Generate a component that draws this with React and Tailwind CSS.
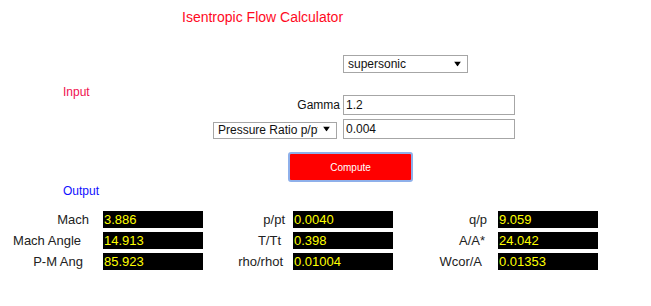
import React, { useState } from "react";

const rows = [
  [
    { label: "Mach", value: "3.886", pad: "pr-[14px]" },
    { label: "p/pt", value: "0.0040", pad: "pr-[8px]" },
    { label: "q/p", value: "9.059", pad: "pr-[11px]" },
  ],
  [
    { label: "Mach Angle", value: "14.913", pad: "pr-[22px]" },
    { label: "T/Tt", value: "0.398", pad: "pr-[12px]" },
    { label: "A/A*", value: "24.042", pad: "pr-[13px]" },
  ],
  [
    { label: "P-M Ang", value: "85.923", pad: "pr-[20px]" },
    { label: "rho/rhot", value: "0.01004", pad: "pr-[10px]" },
    { label: "Wcor/A", value: "0.01353", pad: "pr-[16px]" },
  ],
];

// label cell widths for the three output columns
const labelWidths = ["w-[103px]", "w-[90px]", "w-[105px]"];

const Arrow = () => (
  <svg
    width="7"
    height="5"
    viewBox="0 0 7 5"
    className="pointer-events-none absolute right-[7px] top-1/2 -translate-y-1/2"
  >
    <path d="M0 0 H7 L3.5 5 Z" fill="#000" />
  </svg>
);

const App = () => {
  const [mode, setMode] = useState("supersonic");
  const [inputType, setInputType] = useState("p");
  const [gamma, setGamma] = useState("1.2");
  const [ratio, setRatio] = useState("0.004");

  return (
    <div
      className="w-[651px] h-[306px] bg-white text-[12px] text-[#111]"
      style={{ fontFamily: '"Liberation Sans", Arial, sans-serif' }}
    >
      <h1 className="pt-[9px] pl-[182px] text-[14px] leading-[16px] text-[#ff0a1e]">
        Isentropic Flow Calculator
      </h1>

      <div className="mt-[30px] pl-[343px]">
        <div className="relative w-[125px] h-[18px]">
          <select
            value={mode}
            onChange={(e) => setMode(e.target.value)}
            className="appearance-none w-full h-full border border-[#a6a6a6] bg-white pl-[4px] text-[12px] leading-[16px] outline-none"
          >
            <option value="supersonic">supersonic</option>
            <option value="subsonic">subsonic</option>
          </select>
          <Arrow />
        </div>
      </div>

      <div className="mt-[12px] pl-[63px] leading-[14px] text-[#f0104e]">Input</div>

      <div className="-mt-[4px] flex items-center">
        <div className="w-[340px] text-right leading-[14px]">Gamma</div>
        <input
          value={gamma}
          onChange={(e) => setGamma(e.target.value)}
          className="ml-[3px] w-[172px] h-[20px] border border-[#a6a6a6] px-[2px] text-[12px] outline-none"
        />
      </div>

      <div className="mt-[4px] flex items-center pl-[213px]">
        <div className="relative w-[124px] h-[17px]">
          <select
            value={inputType}
            onChange={(e) => setInputType(e.target.value)}
            className="appearance-none w-full h-full overflow-hidden border border-[#a6a6a6] bg-white pl-[4px] pr-[18px] text-[12px] leading-[15px] outline-none"
          >
            <option value="p">Pressure Ratio p/pt</option>
            <option value="t">Temperature Ratio T/Tt</option>
            <option value="m">Mach Number</option>
          </select>
          <Arrow />
        </div>
        <input
          value={ratio}
          onChange={(e) => setRatio(e.target.value)}
          className="ml-[6px] w-[172px] h-[20px] border border-[#a6a6a6] px-[2px] text-[12px] outline-none"
        />
      </div>

      <div className="mt-[13px] pl-[288px]">
        <button className="w-[125px] h-[30px] bg-[#ff0000] border-2 border-[#8fb0ea] rounded-[3px] text-white text-[10px]">
          Compute
        </button>
      </div>

      <div className="mt-[2px] pl-[63px] leading-[14px] text-[#1010ff]">Output</div>

      <div className="mt-[13px] flex flex-col gap-[4px]">
        {rows.map((row, i) => (
          <div key={i} className="flex items-center">
            {row.map((cell, j) => (
              <React.Fragment key={j}>
                <div
                  className={`${labelWidths[j]} ${cell.pad} text-right text-[13px] text-[#222] leading-[17px]`}
                >
                  {cell.label}
                </div>
                <div className="w-[100px] h-[17px] bg-black pl-[1px] text-[13px] leading-[17px] text-[#ffff00]">
                  {cell.value}
                </div>
              </React.Fragment>
            ))}
          </div>
        ))}
      </div>
    </div>
  );
};

export default App;
